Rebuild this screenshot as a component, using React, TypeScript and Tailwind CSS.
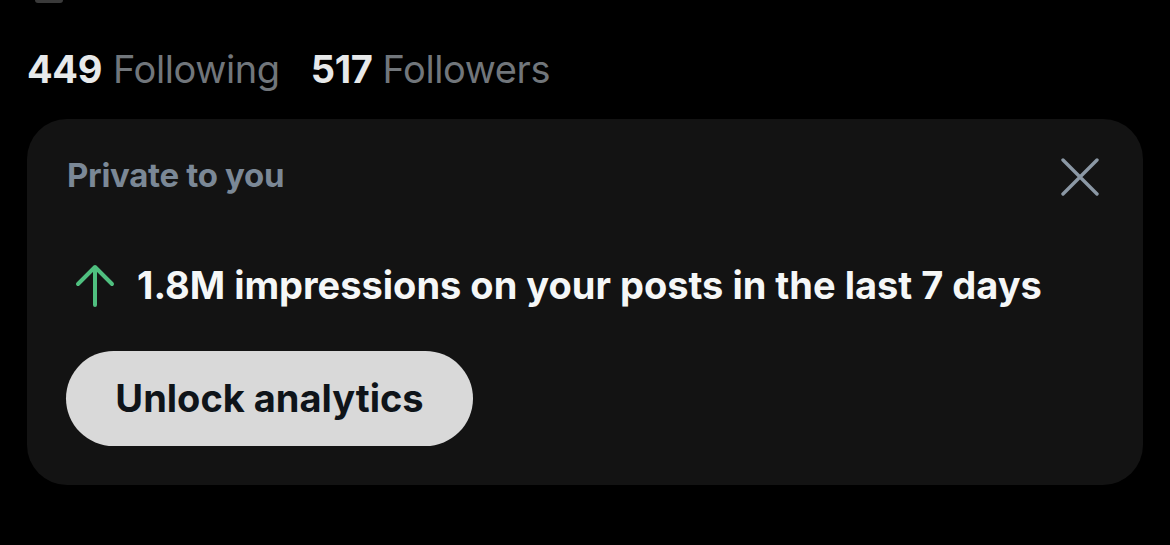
export default function App() {
  return (
    <div
      className="h-[545px] w-[1170px] overflow-hidden bg-black"
      style={{ fontFamily: 'Inter, "Noto Sans", sans-serif' }}
    >
      <div className="ml-[35px] h-[3px] w-[28px] rounded-b-sm bg-[#3a3a3a]" />

      <div className="ml-[27px] mt-[47px] flex items-baseline text-[38px] leading-none tracking-[-0.01em]">
        <span className="font-bold text-[#e7e9ea]">449</span>
        <span className="ml-[11px] text-[#71767b]">Following</span>
        <span className="ml-[31px] font-bold text-[#e7e9ea]">517</span>
        <span className="ml-[10px] text-[#71767b]">Followers</span>
      </div>

      <div className="ml-[27px] mt-[31px] w-[1116px] rounded-[40px] bg-[#131313] px-[40px] pb-[39px] pt-[40px]">
        <div className="flex h-[34px] items-start justify-between">
          <p className="text-[33px] font-bold leading-none tracking-[-0.01em] text-[#7b8896]">
            Private to you
          </p>
          <svg width="38" height="38" viewBox="0 0 38 38" className="mr-[4px] mt-[-1px] shrink-0">
            <path d="M2 2 L36 36 M36 2 L2 36" stroke="#8b98a5" strokeWidth="3.4" strokeLinecap="round" fill="none" />
          </svg>
        </div>

        <div className="mt-[71px] flex items-start">
          <svg width="40" height="44" viewBox="0 0 40 44" className="ml-[8px] shrink-0">
            <path
              d="M3 20 L20 3 L37 20 M20 3 V41"
              stroke="#4fbf7f"
              strokeWidth="4"
              strokeLinecap="round"
              strokeLinejoin="round"
              fill="none"
            />
          </svg>
          <p className="ml-[22px] mt-[2px] text-[38px] font-bold leading-none text-[#f5f7f7]">
            1.8M impressions on your posts in the last 7 days
          </p>
        </div>

        <button className="-ml-[1px] mt-[43px] flex h-[95px] w-[407px] items-center justify-center rounded-full bg-[#d9d9d9] text-[38px] font-bold text-[#0f1419]">
          Unlock analytics
        </button>
      </div>
    </div>
  )
}
